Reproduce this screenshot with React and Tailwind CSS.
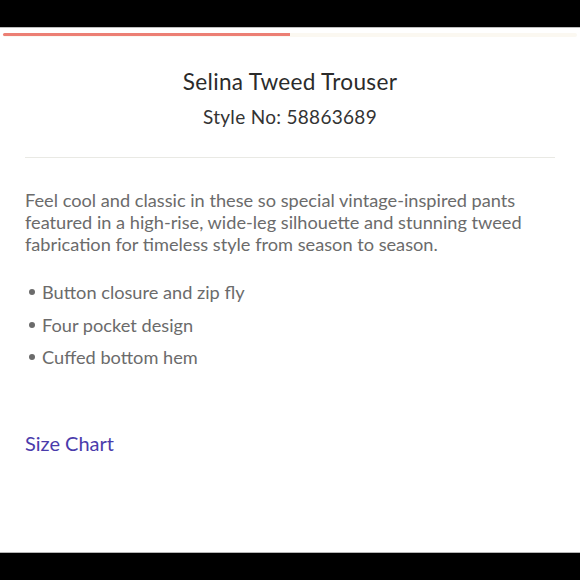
export default function App() {
  return (
    <div className="w-[580px] h-[580px] bg-white flex flex-col overflow-hidden" style={{ fontFamily: 'Lato, "Noto Sans", sans-serif' }}>
      <div className="h-[27px] bg-black shrink-0" />
      <div className="h-px bg-[#bdbdbd] shrink-0" />
      <div className="px-[3px] pt-[5px] shrink-0">
        <div className="h-[4px] bg-[#fbf8f1] rounded-full flex">
          <div className="w-[287px] h-[3px] bg-[#ec7f74] rounded-l-full" />
        </div>
      </div>
      <div className="flex-1 flex flex-col px-[25px]">
        <div className="flex flex-col items-center pt-[31px]">
          <h1 className="text-[22.6px] leading-[28px] text-[#2b2b2b] tracking-[0.3px]">Selina Tweed Trouser</h1>
          <p className="text-[19px] leading-[24px] text-[#333] mt-[9px] tracking-[0.3px]">Style No: 58863689</p>
        </div>
        <div className="h-px bg-[#e9e9e4] mt-[28px]" />
        <p className="text-[18.2px] leading-[22px] text-[#6b6b6b] mt-[31px]">
          Feel cool and classic in these so special vintage-inspired pants featured in a high-rise, wide-leg silhouette and stunning tweed fabrication for timeless style from season to season.
        </p>
        <ul className="mt-[26px] flex flex-col gap-[10.5px] text-[18.2px] leading-[22px] text-[#6b6b6b]">
          {["Button closure and zip fly", "Four pocket design", "Cuffed bottom hem"].map((t) => (
            <li key={t} className="flex items-center">
              <span className="w-[6px] h-[6px] rounded-full bg-[#6b6b6b] ml-[4px] mr-[7px]" />
              {t}
            </li>
          ))}
        </ul>
        <a className="mt-[63px] text-[20px] leading-[24px] text-[#4a3bab]">Size Chart</a>
      </div>
      <div className="h-px bg-[#b5b5b5] shrink-0" />
      <div className="h-[27px] bg-black shrink-0" />
    </div>
  );
}
